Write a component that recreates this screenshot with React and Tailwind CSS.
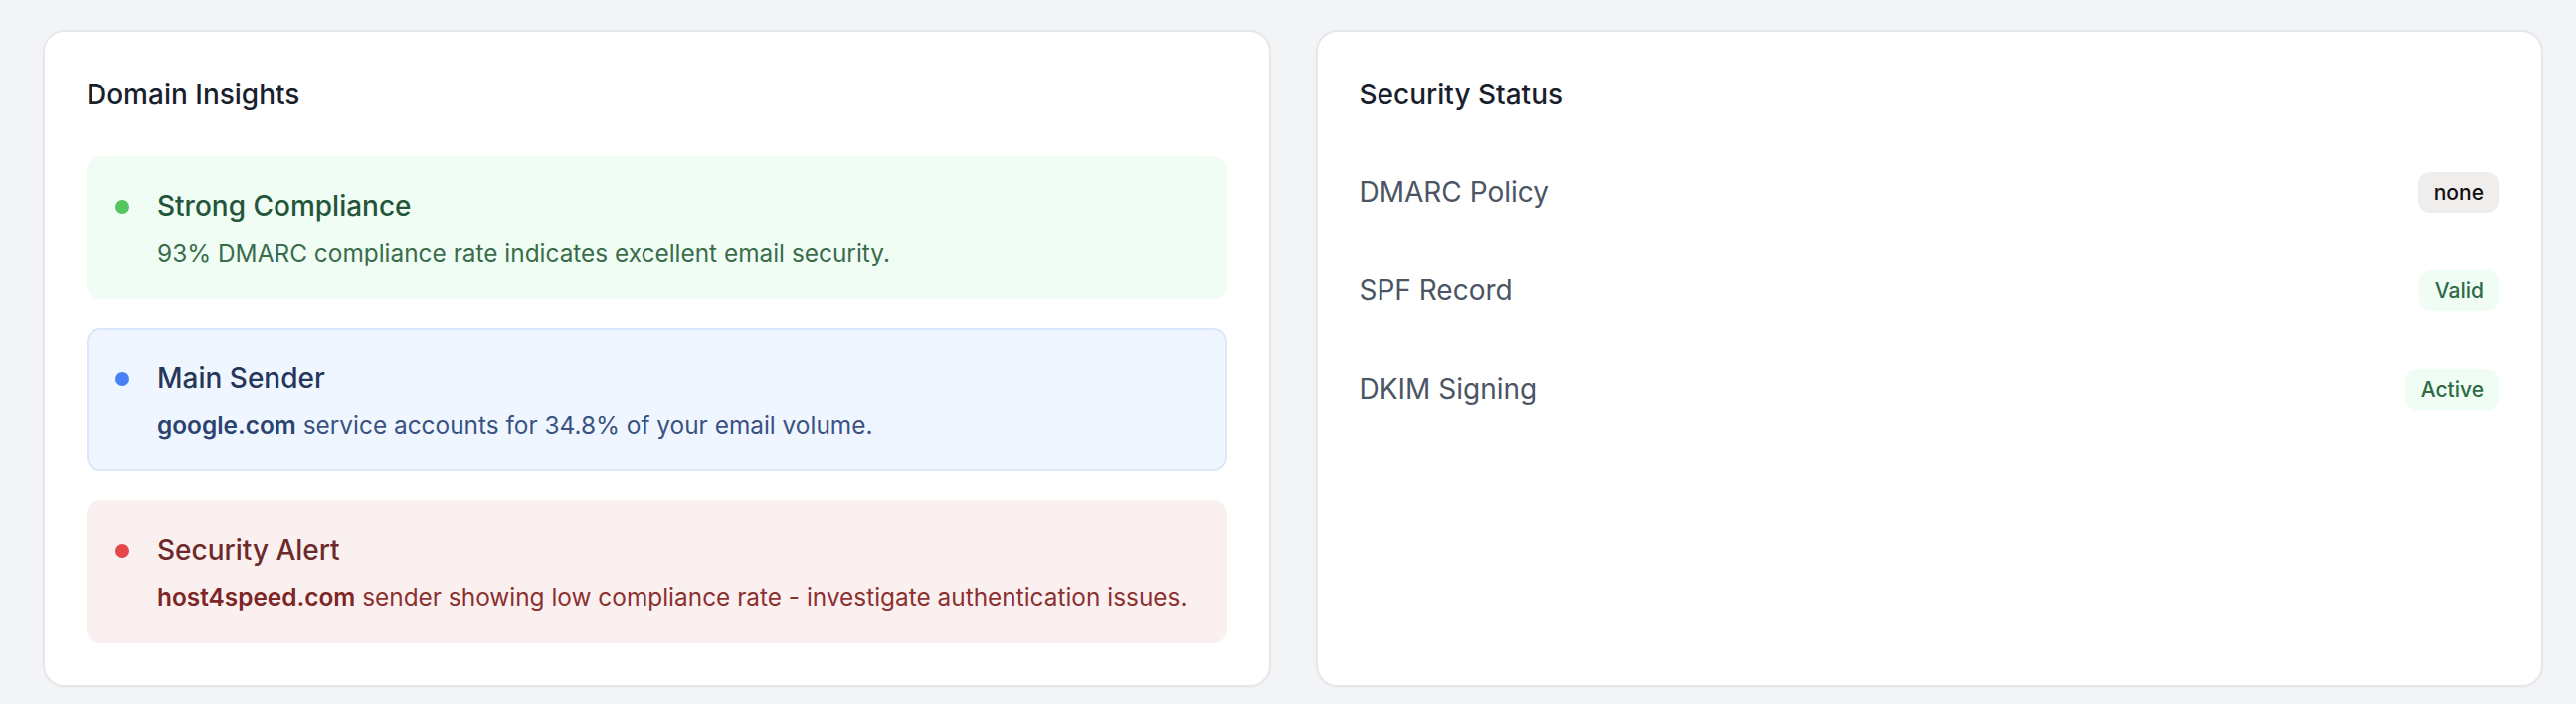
import React from "react";

const insights = [
  {
    title: "Strong Compliance",
    strong: null,
    text: "93% DMARC compliance rate indicates excellent email security.",
    box: "bg-[#f0fdf4] border-[#f0fdf4]",
    dot: "bg-[#56c45f]",
    titleColor: "text-[#24553a]",
    textColor: "text-[#3a6c4a]",
    strongColor: "",
  },
  {
    title: "Main Sender",
    strong: "google.com",
    text: " service accounts for 34.8% of your email volume.",
    box: "bg-[#eff6ff] border-[#dbe7fb]",
    dot: "bg-[#4a80f6]",
    titleColor: "text-[#26375a]",
    textColor: "text-[#3a5282]",
    strongColor: "text-[#2c4370]",
  },
  {
    title: "Security Alert",
    strong: "host4speed.com",
    text: " sender showing low compliance rate - investigate authentication issues.",
    box: "bg-[#fbf0f0] border-[#fbf0f0]",
    dot: "bg-[#e5474b]",
    titleColor: "text-[#6c2a2a]",
    textColor: "text-[#8c3030]",
    strongColor: "text-[#7e2525]",
  },
];

const statuses = [
  { label: "DMARC Policy", value: "none", badge: "bg-[#f0eded] text-[#0f0f0f]" },
  { label: "SPF Record", value: "Valid", badge: "bg-[#f0fdf4] text-[#2e6a45]" },
  { label: "DKIM Signing", value: "Active", badge: "bg-[#f0fdf4] text-[#2e6a45]" },
];

const Card = ({ title, children }) => (
  <div className="bg-white border-2 border-[#e5e7eb] rounded-[22px] p-[42px] shadow-[0_1px_2px_rgba(0,0,0,0.03)]">
    <h2 className="text-[28px] leading-[43px] font-medium text-[#1a1f2e]">{title}</h2>
    {children}
  </div>
);

const App = () => {
  return (
    <div className="min-h-screen bg-[#f3f4f6] pt-[30px] pl-[43px] pr-[33px] font-['Inter',sans-serif]">
      <div className="grid grid-cols-2 gap-[45px]">
        <Card title="Domain Insights">
          <div className="mt-[40px] flex flex-col gap-[29px]">
            {insights.map((item) => (
              <div
                key={item.title}
                className={`border-2 rounded-[14px] py-[27px] px-[27px] flex items-start gap-[28px] ${item.box}`}
              >
                <span className={`w-[14px] h-[14px] rounded-full shrink-0 mt-[15px] ${item.dot}`} />
                <div>
                  <p className={`text-[28px] leading-[43px] font-medium ${item.titleColor}`}>
                    {item.title}
                  </p>
                  <p className={`mt-[7px] text-[24.4px] leading-[36px] whitespace-nowrap ${item.textColor}`}>
                    {item.strong && (
                      <span className={`font-semibold ${item.strongColor}`}>{item.strong}</span>
                    )}
                    {item.text}
                  </p>
                </div>
              </div>
            ))}
          </div>
        </Card>

        <Card title="Security Status">
          <div className="mt-[55px] flex flex-col gap-[56px]">
            {statuses.map((row) => (
              <div key={row.label} className="flex items-center justify-between h-[43px]">
                <span className="text-[28px] leading-[43px] text-[#4b5563]">{row.label}</span>
                <span
                  className={`inline-flex items-center rounded-[12px] border-2 border-transparent px-[14px] py-[4px] text-[21px] leading-[29px] font-medium ${row.badge}`}
                >
                  {row.value}
                </span>
              </div>
            ))}
          </div>
        </Card>
      </div>
    </div>
  );
};

export default App;
